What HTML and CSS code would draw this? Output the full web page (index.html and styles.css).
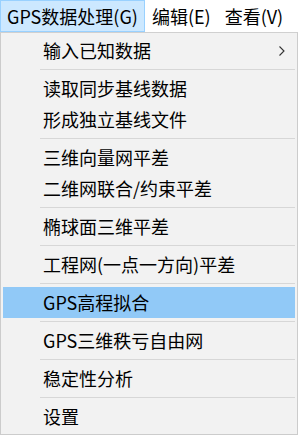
FILE: index.html
```html
<!DOCTYPE html>
<html lang="zh-CN">

<head>
    <meta charset="UTF-8">
    <meta name="viewport" content="width=device-width, initial-scale=1.0">
    <title>GPS数据处理</title>
    <link rel="stylesheet" href="styles.css">
</head>

<body>

    <div class="menubar">
        <div class="menubar-item active">GPS数据处理(G)</div>
        <div class="menubar-item">编辑(E)</div>
        <div class="menubar-item">查看(V)</div>
    </div>

    <div class="dropdown">
        <div class="menu-item has-sub">
            <span>输入已知数据</span>
            <svg class="arrow" width="6" height="10" viewBox="0 0 6 10">
                <path d="M0.5 0.5 L5 5 L0.5 9.5" fill="none" stroke="#333" stroke-width="1.1" />
            </svg>
        </div>
        <div class="separator"></div>
        <div class="menu-item">读取同步基线数据</div>
        <div class="menu-item">形成独立基线文件</div>
        <div class="separator"></div>
        <div class="menu-item">三维向量网平差</div>
        <div class="menu-item">二维网联合/约束平差</div>
        <div class="separator"></div>
        <div class="menu-item">椭球面三维平差</div>
        <div class="separator"></div>
        <div class="menu-item">工程网(一点一方向)平差</div>
        <div class="separator"></div>
        <div class="menu-item selected">GPS高程拟合</div>
        <div class="separator"></div>
        <div class="menu-item">GPS三维秩亏自由网</div>
        <div class="separator"></div>
        <div class="menu-item">稳定性分析</div>
        <div class="separator"></div>
        <div class="menu-item">设置</div>
    </div>

</body>

</html>
```

FILE: styles.css
```css
* {
    box-sizing: border-box;
    margin: 0;
    padding: 0;
}

body {
    width: 298px;
    height: 435px;
    overflow: hidden;
    background: #fff;
    color: #000;
    font-family: "Noto Sans CJK SC", "Microsoft YaHei", sans-serif;
    font-size: 18px;
}

.menubar {
    display: flex;
    height: 32px;
    background: #fff;
}

.menubar-item {
    height: 32px;
    line-height: 30px;
    padding: 0 6px;
    border: 1px solid transparent;
    white-space: nowrap;
}

.menubar-item.active {
    background-color: #cce8ff;
    border-color: #99d1ff;
}

.dropdown {
    width: 298px;
    height: 403px;
    background-color: #f2f2f2;
    border: 1px solid #cccccc;
    border-top-color: #d0d0d0;
    padding: 2px 2px;
}

.menu-item {
    display: flex;
    align-items: center;
    height: 31px;
    line-height: 31px;
    padding-left: 40px;
    padding-right: 10px;
    white-space: nowrap;
}

.menu-item.has-sub {
    justify-content: space-between;
}

.menu-item .arrow {
    display: block;
}

.menu-item.selected {
    background-color: #91c9f7;
}

.separator {
    height: 1px;
    margin: 3px 0 3px 37px;
    background-color: #d7d7d7;
}
```
